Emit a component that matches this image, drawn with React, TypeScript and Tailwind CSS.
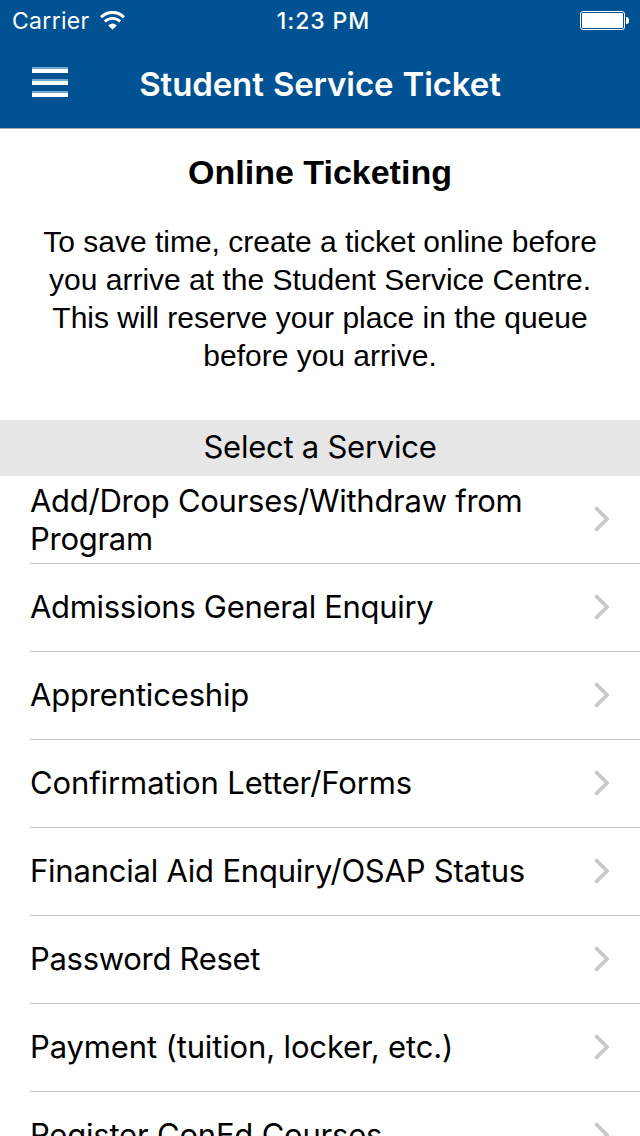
type Service = {
  name: string;
  tracking: string;
};

const services: Service[] = [
  { name: "Add/Drop Courses/Withdraw from Program", tracking: "pt-px tracking-[-0.27px]" },
  { name: "Admissions General Enquiry", tracking: "tracking-[-0.31px]" },
  { name: "Apprenticeship", tracking: "tracking-[-0.17px]" },
  { name: "Confirmation Letter/Forms", tracking: "tracking-[-0.1px]" },
  { name: "Financial Aid Enquiry/OSAP Status", tracking: "tracking-[-0.22px]" },
  { name: "Password Reset", tracking: "tracking-[-0.3px]" },
  { name: "Payment (tuition, locker, etc.)", tracking: "tracking-[-0.14px]" },
  { name: "Register ConEd Courses", tracking: "tracking-[-0.2px]" },
];

function WifiIcon() {
  return (
    <svg width="26" height="20" viewBox="0 0 26 20" fill="none">
      <path d="M1.1 6.2a16 16 0 0 1 22.8 0" stroke="white" strokeWidth="3" />
      <path d="M4.8 10.6a10.8 10.8 0 0 1 15.4 0" stroke="white" strokeWidth="2.9" />
      <path d="M12.5 18.8 8.2 14.4a6 6 0 0 1 8.6 0z" fill="white" />
    </svg>
  );
}

function BatteryIcon() {
  return (
    <svg width="50" height="20" viewBox="0 0 50 20">
      <rect x="0.5" y="0.5" width="44" height="18" rx="2.5" fill="none" stroke="white" />
      <rect x="2" y="2" width="41" height="15" rx="1" fill="white" />
      <path d="M46 6h.5a2.5 3.5 0 0 1 0 7H46z" fill="white" />
    </svg>
  );
}

function MenuIcon() {
  return (
    <div className="flex w-9 flex-col gap-1.5">
      <span className="h-1.5 border-t-2 border-[#75a4cf] bg-white" />
      <span className="h-1.5 border-t-2 border-[#75a4cf] bg-white" />
      <span className="h-1.5 border-t-2 border-[#75a4cf] bg-white" />
    </div>
  );
}

function ServiceRow({ name, tracking }: Service) {
  return (
    <li className="ml-[30px] flex h-[88px] shrink-0 items-center justify-between border-b border-[#c8c7cc] pr-[29px] pb-px">
      <span className={`w-[530px] text-[31px] leading-[38px] ${tracking}`}>{name}</span>
      <svg width="18" height="28" viewBox="0 0 18 28" fill="none">
        <path d="M2.5 2.5 14 14 2.5 25.5" stroke="#c7c7cc" strokeWidth="3.7" />
      </svg>
    </li>
  );
}

export default function App() {
  return (
    <div className="flex h-[1136px] w-[640px] flex-col overflow-hidden bg-white font-['Inter',sans-serif] text-black">
      <header className="h-[129px] shrink-0 border-b border-[#a5a9ad] bg-[#005293] text-white">
        <div className="grid h-10 grid-cols-3 items-center pt-0.5 pr-[10px] pl-3 text-[23px]">
          <div className="flex items-center gap-2.5">
            <span className="tracking-[0.3px]">Carrier</span>
            <WifiIcon />
          </div>
          <span className="pl-[5px] text-center font-medium tracking-[0.9px]">1:23 PM</span>
          <div className="flex justify-end">
            <BatteryIcon />
          </div>
        </div>
        <div className="grid h-[88px] grid-cols-[108px_1fr_108px] items-center">
          <button className="pb-1 pl-8" aria-label="Menu">
            <MenuIcon />
          </button>
          <h1 className="pt-px text-center text-[33px] font-semibold tracking-[-0.12px] [word-spacing:1px] whitespace-nowrap">
            Student Service Ticket
          </h1>
        </div>
      </header>

      <section className="h-[291px] shrink-0 pt-[23px] text-center font-['Liberation_Sans',sans-serif]">
        <h2 className="text-[34px] leading-[40px] font-bold">Online Ticketing</h2>
        <p className="mt-[31px] text-[30px] leading-[38px] whitespace-nowrap">
          <span className="block">To save time, create a ticket online before</span>
          <span className="block">you arrive at the Student Service Centre.</span>
          <span className="block">This will reserve your place in the queue</span>
          <span className="block">before you arrive.</span>
        </p>
      </section>

      <h3 className="h-14 shrink-0 bg-[#e6e6e6] text-center text-[31px] leading-[54px] tracking-[-0.25px]">
        Select a Service
      </h3>

      <ul className="flex flex-col">
        {services.map((service) => (
          <ServiceRow key={service.name} {...service} />
        ))}
      </ul>
    </div>
  );
}
